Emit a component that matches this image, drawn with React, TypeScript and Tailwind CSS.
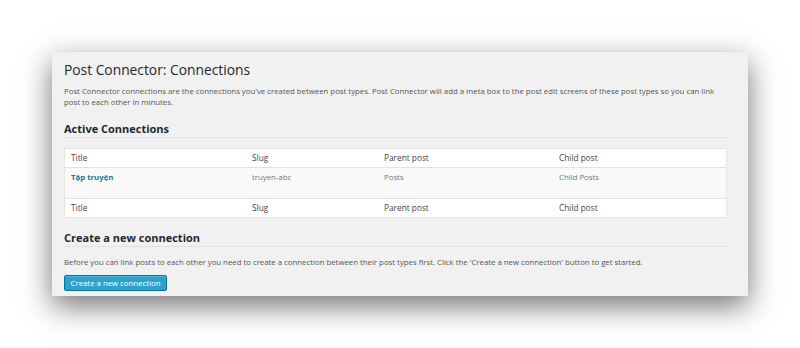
export default function App() {
  const font = { fontFamily: '"Open Sans", "Noto Sans", sans-serif' };
  return (
    <div className="w-[800px] h-[348px] bg-white pt-[52px] pl-[52px] overflow-hidden" style={font}>
      <div className="w-[696px] h-[244px] bg-[#f1f1f1] shadow-[0_10px_28px_rgba(0,0,0,0.55)] pl-[12px] pr-[21px] pt-[8px]">
        <h1 className="text-[13.8px] leading-[20px] text-[#23282d]">Post Connector: Connections</h1>
        <p className="mt-[6px] text-[7.8px] leading-[11px] text-[#555]">
          Post Connector connections are the connections you've created between post types. Post Connector will add a meta box to the post edit screens of these post types so you can link post to each other in minutes.
        </p>
        <h2 className="mt-[13px] text-[11px] leading-[16px] font-bold text-[#23282d] border-b border-[#e1e1e1]">Active Connections</h2>
        <div className="mt-[10px] bg-white border border-[#e5e5e5] text-[8.3px] text-[#444]">
          <div className="flex h-[19px] items-center border-b border-[#e1e1e1]">
            <div className="w-[187px] pl-[6px]">Title</div>
            <div className="w-[132px]">Slug</div>
            <div className="w-[175px]">Parent post</div>
            <div>Child post</div>
          </div>
          <div className="flex h-[30px] pt-[4px] text-[7.8px] leading-[10px] bg-[#f9f9f9] text-[#777]">
            <div className="w-[187px] pl-[6px] font-bold text-[#21759b]">Tập truyện</div>
            <div className="w-[132px]">truyen-abc</div>
            <div className="w-[175px]">Posts</div>
            <div>Child Posts</div>
          </div>
          <div className="flex h-[19px] items-center border-t border-[#e1e1e1]">
            <div className="w-[187px] pl-[6px]">Title</div>
            <div className="w-[132px]">Slug</div>
            <div className="w-[175px]">Parent post</div>
            <div>Child post</div>
          </div>
        </div>
        <h2 className="mt-[12px] text-[11px] leading-[16px] font-bold text-[#23282d] border-b border-[#e1e1e1]">Create a new connection</h2>
        <p className="mt-[10px] text-[7.8px] leading-[11px] text-[#555]">
          Before you can link posts to each other you need to create a connection between their post types first. Click the 'Create a new connection' button to get started.
        </p>
        <button className="mt-[5px] h-[16px] w-[103px] bg-[#2ea2cc] rounded-[2px] border border-[#0074a2] text-white text-[7.8px] leading-[14px] shadow-[inset_0_1px_0_rgba(120,200,230,0.5)]">
          Create a new connection
        </button>
      </div>
    </div>
  );
}
